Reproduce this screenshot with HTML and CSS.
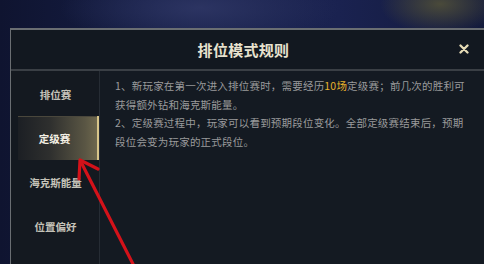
FILE: index.html
```html
<!DOCTYPE html>
<html lang="zh">
<head>
<meta charset="utf-8">
<link rel="stylesheet" href="styles.css">
</head>
<body>
<div class="scene">
  <div class="dialog">
    <div class="header">
      <div class="title">排位模式规则</div>
      <svg class="close" width="10" height="10" viewBox="0 0 10 10">
        <path d="M1.5 1.5 L8.5 8.5 M8.5 1.5 L1.5 8.5" stroke="#e6dcb6" stroke-width="2.3" stroke-linecap="round"/>
      </svg>
    </div>
    <div class="body">
      <nav class="side">
        <div class="item">排位赛</div>
        <div class="item active">定级赛</div>
        <div class="item">海克斯能量</div>
        <div class="item">位置偏好</div>
      </nav>
      <div class="content">
        <p>1、新玩家在第一次进入排位赛时，需要经历<span class="hl">10场</span>定级赛；前几次的胜利可获得额外钻和海克斯能量。</p>
        <p>2、定级赛过程中，玩家可以看到预期段位变化。全部定级赛结束后，预期段位会变为玩家的正式段位。</p>
      </div>
    </div>
  </div>
  <svg class="arrow" width="484" height="264" viewBox="0 0 484 264">
    <path d="M134 266 L81 162" stroke="#d4121a" stroke-width="3.2" fill="none" stroke-linecap="round"/>
    <path d="M98 169 L80 160 L79 179" stroke="#d4121a" stroke-width="3.2" fill="none" stroke-linecap="round" stroke-linejoin="round"/>
  </svg>
</div>
</body>
</html>
```
FILE: styles.css
```css
html, body {
  margin: 0;
  padding: 0;
  width: 484px;
  height: 264px;
  overflow: hidden;
}
body {
  font-family: "Noto Sans CJK SC", "Noto Sans", sans-serif;
  background:
    radial-gradient(ellipse 140px 40px at 200px 8px, #2c3462 0%, rgba(44,52,98,0) 100%),
    radial-gradient(ellipse 60px 30px at 440px 4px, #4a4a3a 0%, rgba(74,74,58,0) 100%),
    linear-gradient(90deg, #0f1430 0%, #17204a 40%, #1a2250 70%, #131a3c 100%);
}
.scene {
  position: relative;
  width: 484px;
  height: 264px;
  padding: 28px 0 0 10px;
  box-sizing: border-box;
}
.dialog {
  height: 236px;
  box-sizing: border-box;
  border-top: 2px solid #6a6e72;
  border-left: 1px solid #6a6e72;
  background: #131920;
  display: flex;
  flex-direction: column;
}
.header {
  height: 39px;
  flex: none;
  display: flex;
  align-items: center;
  justify-content: center;
  position: relative;
  border-bottom: 2px solid #3a3f45;
  background: #121820;
}
.title {
  font-size: 15px;
  font-weight: bold;
  color: #e8e2cf;
  letter-spacing: 0.3px;
  margin-right: 8px;
}
.close {
  position: absolute;
  left: 448px;
  top: 14px;
}
.body {
  flex: 1;
  display: flex;
}
.side {
  width: 88px;
  flex: none;
  border-right: 1px solid #262c34;
  background: #141920;
  padding-top: 1px;
  display: flex;
  flex-direction: column;
  align-items: flex-end;
}
.item {
  width: 81px;
  height: 44px;
  display: flex;
  align-items: center;
  justify-content: center;
  font-size: 10.5px;
  font-weight: bold;
  color: #c4c2b8;
  padding-right: 6px;
  box-sizing: border-box;
}
.item.active {
  color: #f4f0e4;
  background: linear-gradient(90deg, #1c1f24 0%, #2e2f2e 40%, #5a5644 85%, #6e684e 100%);
  border-right: 2px solid #d8c68a;
  box-shadow: inset 0 1px 0 #4a473c;
}
.content {
  flex: 1;
  padding: 6px 0 0 15px;
  background: #141a22;
}
.content p {
  margin: 0;
  width: 352px;
  font-size: 10.5px;
  line-height: 18.5px;
  letter-spacing: 0.2px;
  color: #9a9b9c;
}
.hl {
  color: #e8b22c;
}
.arrow {
  position: absolute;
  left: 0;
  top: 0;
}
```
